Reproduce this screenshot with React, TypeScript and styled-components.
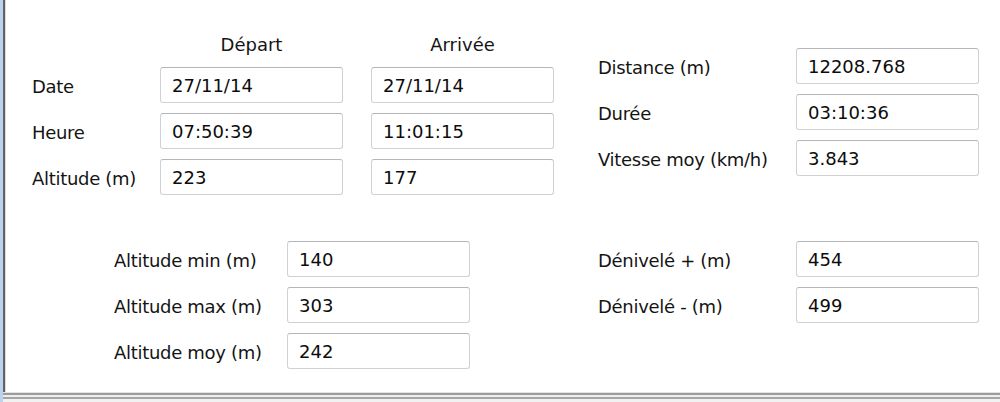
import React from 'react';
import styled, {createGlobalStyle} from 'styled-components';

const GlobalStyle = createGlobalStyle`
    html, body {
        margin: 0;
        padding: 0;
        background: #ffffff;
    }
    body {
        font-family: 'DejaVu Sans', Verdana, sans-serif;
        font-size: 18px;
        color: #141414;
    }
`;

interface FieldRow {
    label: string,
    values: string[],
}

const timeRows: FieldRow[] = [
    {label: 'Date', values: ['27/11/14', '27/11/14']},
    {label: 'Heure', values: ['07:50:39', '11:01:15']},
    {label: 'Altitude (m)', values: ['223', '177']},
];

const summaryRows: FieldRow[] = [
    {label: 'Distance (m)', values: ['12208.768']},
    {label: 'Durée', values: ['03:10:36']},
    {label: 'Vitesse moy (km/h)', values: ['3.843']},
];

const altitudeRows: FieldRow[] = [
    {label: 'Altitude min (m)', values: ['140']},
    {label: 'Altitude max (m)', values: ['303']},
    {label: 'Altitude moy (m)', values: ['242']},
];

const elevationRows: FieldRow[] = [
    {label: 'Dénivelé + (m)', values: ['454']},
    {label: 'Dénivelé - (m)', values: ['499']},
];

const App = () => {
    return (
        <>
            <GlobalStyle/>
            <Window>
                <Content>
                    <Section>
                        <TimeGrid>
                            <span/>
                            <ColumnTitle>Départ</ColumnTitle>
                            <ColumnTitle>Arrivée</ColumnTitle>
                            {timeRows.map((row) => (
                                <React.Fragment key={row.label}>
                                    <Label>{row.label}</Label>
                                    {row.values.map((value, i) => (
                                        <Field key={i}>{value}</Field>
                                    ))}
                                </React.Fragment>
                            ))}
                        </TimeGrid>
                        <StatGrid top={48}>
                            {summaryRows.map((row) => (
                                <React.Fragment key={row.label}>
                                    <Label>{row.label}</Label>
                                    <Field>{row.values[0]}</Field>
                                </React.Fragment>
                            ))}
                        </StatGrid>
                    </Section>
                    <LowerSection>
                        <AltitudeGrid>
                            {altitudeRows.map((row) => (
                                <React.Fragment key={row.label}>
                                    <Label>{row.label}</Label>
                                    <Field>{row.values[0]}</Field>
                                </React.Fragment>
                            ))}
                        </AltitudeGrid>
                        <StatGrid top={0}>
                            {elevationRows.map((row) => (
                                <React.Fragment key={row.label}>
                                    <Label>{row.label}</Label>
                                    <Field>{row.values[0]}</Field>
                                </React.Fragment>
                            ))}
                        </StatGrid>
                    </LowerSection>
                </Content>
                <BottomEdge/>
            </Window>
        </>
    );
};

const Window = styled.div`
    display: flex;
    flex-direction: column;
    height: 402px;
    box-sizing: border-box;
    border-left: 3px solid #bcd3ec;
    background: #ffffff;
`;

const Content = styled.div`
    flex: 1;
    display: flex;
    flex-direction: column;
    border-left: 2px solid #5f6266;
    box-shadow: inset 1px 0 0 #d9dadc;
`;

const Section = styled.div`
    display: flex;
    align-items: flex-start;
`;

const LowerSection = styled(Section)`
    margin-top: 46px;
`;

const TimeGrid = styled.div`
    display: grid;
    grid-template-columns: 100px 183px 183px;
    grid-template-rows: 24px repeat(3, 36px);
    column-gap: 28px;
    row-gap: 10px;
    align-items: center;
    margin: 33px 0 0 27px;
    width: 566px;
`;

const AltitudeGrid = styled.div`
    display: grid;
    grid-template-columns: 173px 183px;
    grid-template-rows: repeat(3, 36px);
    row-gap: 10px;
    align-items: center;
    margin-left: 109px;
    width: 484px;
`;

const StatGrid = styled.div<{top: number}>`
    display: grid;
    grid-template-columns: 198px 183px;
    grid-auto-rows: 36px;
    row-gap: 10px;
    align-items: center;
    margin-top: ${(props) => props.top}px;
`;

const ColumnTitle = styled.div`
    text-align: center;
    line-height: 22px;
`;

const Label = styled.div`
    white-space: nowrap;
    padding-top: 3px;
    letter-spacing: -0.3px;
`;

const Field = styled.div`
    display: flex;
    align-items: center;
    box-sizing: border-box;
    height: 36px;
    padding: 0 11px;
    border: 1px solid #cfd1d4;
    border-top-color: #b4b6b9;
    border-radius: 3px;
    background: #ffffff;
    color: #0c0c0c;
    white-space: nowrap;
`;

const BottomEdge = styled.div`
    height: 10px;
    box-sizing: border-box;
    border-top: 1px solid #e4e4e4;
    background: linear-gradient(
        to bottom,
        #9c9c9c 0px,
        #9c9c9c 2px,
        #eeeeee 2px,
        #eeeeee 4px,
        #a6a6a6 4px,
        #a6a6a6 6px,
        #f1f1f1 6px
    );
`;

export default App;
